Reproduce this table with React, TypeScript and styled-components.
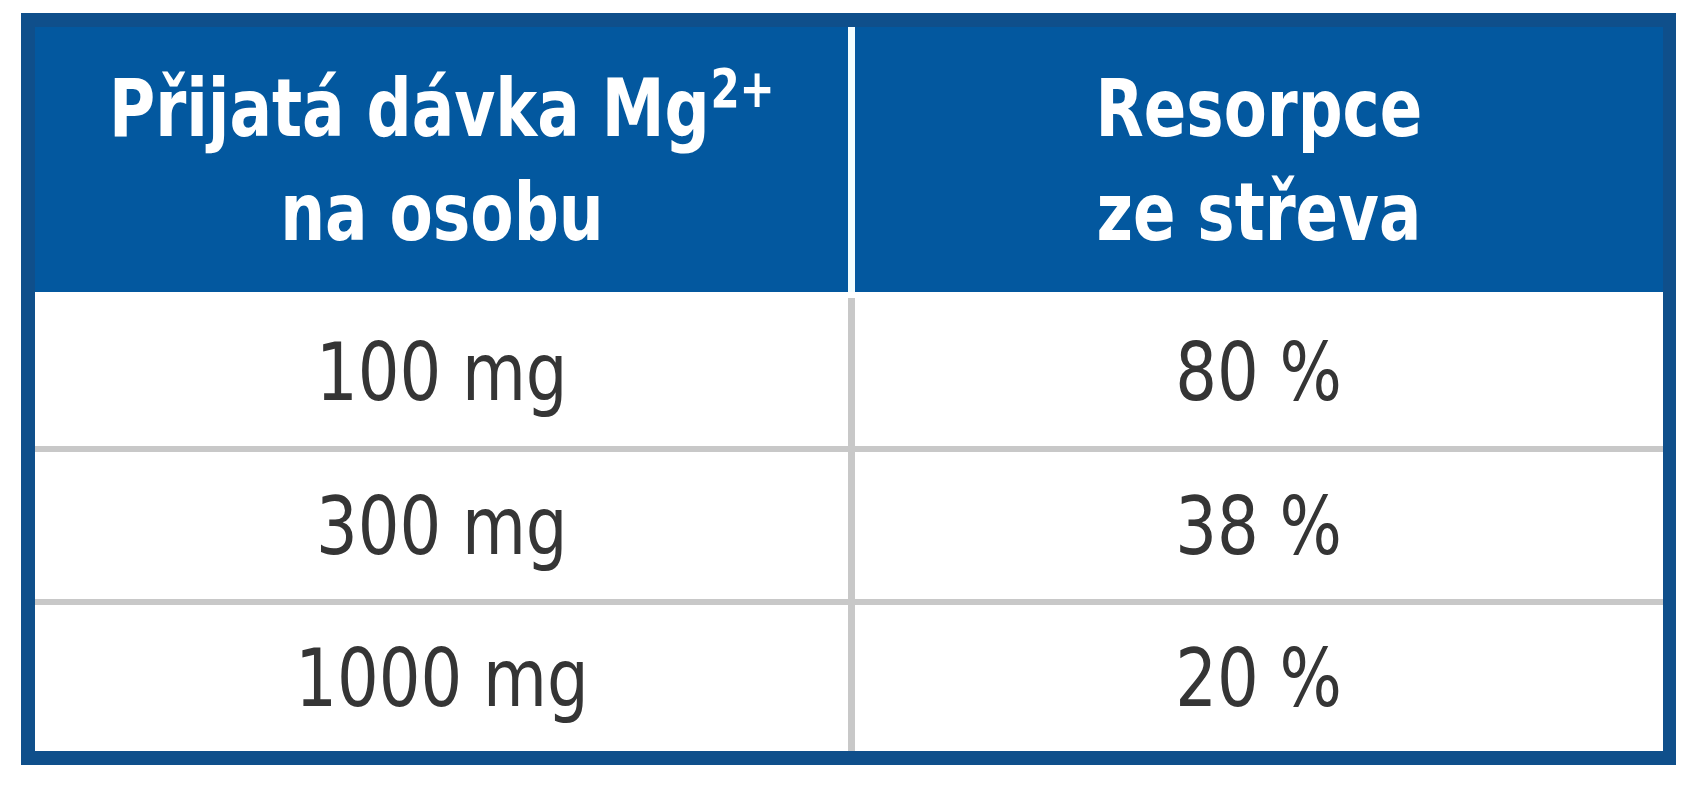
import React from "react";
import styled, { createGlobalStyle } from "styled-components";

const GlobalStyle = createGlobalStyle`
  html, body {
    margin: 0;
    padding: 0;
    background: #ffffff;
  }
  body {
    font-family: "Liberation Sans Narrow", "DejaVu Sans Condensed", "Liberation Sans", sans-serif;
  }
`;

const Page = styled.div`
  padding: 13px 0 0 21px;
`;

const Table = styled.div`
  width: 1655px;
  box-sizing: border-box;
  border-style: solid;
  border-color: #0f4f8b;
  border-width: 14px 13px 14px 14px;
  display: flex;
  flex-direction: column;
  background: #ffffff;
`;

const HeaderRow = styled.div`
  display: grid;
  grid-template-columns: 813px 808px;
  column-gap: 7px;
  background: #f2fdff;
  height: 265px;
  margin-bottom: 6px;
`;

const HeaderCell = styled.div`
  background: #03589f;
  color: #ffffff;
  font-weight: 700;
  font-size: 81px;
  line-height: 104px;
  text-align: center;
  display: flex;
  align-items: center;
  justify-content: center;
`;

const Text = styled.span<{ $sx: number }>`
  display: inline-block;
  white-space: nowrap;
  transform: scaleX(${(p) => p.$sx});
  transform-origin: center;
`;

const Sup = styled.span`
  font-size: 54px;
  line-height: 0;
  vertical-align: 29px;
  margin-left: 1px;
`;

const Body = styled.div`
  display: flex;
  flex-direction: column;
  row-gap: 6px;
  background: #c8c8c8;
`;

const Row = styled.div<{ $h: number }>`
  display: grid;
  grid-template-columns: 813px 808px;
  column-gap: 7px;
  height: ${(p) => p.$h}px;
`;

const Cell = styled.div`
  background: #ffffff;
  color: #353535;
  font-size: 81px;
  line-height: 104px;
  display: flex;
  align-items: center;
  justify-content: center;
`;

const rows = [
  { dose: "100 mg", res: "80 %", h: 148 },
  { dose: "300 mg", res: "38 %", h: 147 },
  { dose: "1000 mg", res: "20 %", h: 146 },
];

export default function App() {
  return (
    <>
      <GlobalStyle />
      <Page>
        <Table>
          <HeaderRow>
            <HeaderCell>
              <Text $sx={0.865}>
                Přijatá dávka Mg<Sup>2+</Sup>
                <br />
                na osobu
              </Text>
            </HeaderCell>
            <HeaderCell>
              <Text $sx={0.86}>
                Resorpce
                <br />
                ze střeva
              </Text>
            </HeaderCell>
          </HeaderRow>
          <Body>
            {rows.map((r) => (
              <Row key={r.dose} $h={r.h}>
                <Cell>
                  <Text $sx={0.9}>{r.dose}</Text>
                </Cell>
                <Cell>
                  <Text $sx={0.9}>{r.res}</Text>
                </Cell>
              </Row>
            ))}
          </Body>
        </Table>
      </Page>
    </>
  );
}
